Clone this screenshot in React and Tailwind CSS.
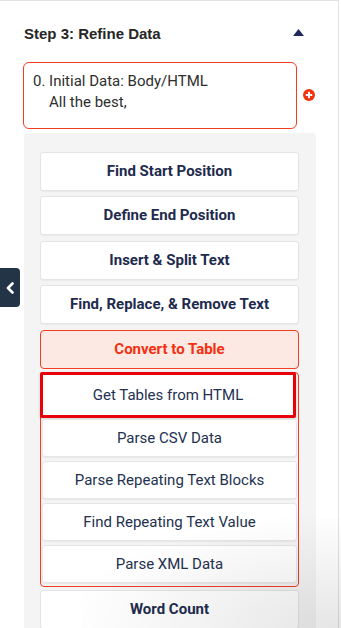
import React from "react";

const outerBtn =
  "h-[39px] w-full flex items-center justify-center bg-white border border-[#e4e4e4] rounded-[3px] text-[15px] font-bold text-[#1e2b4d] shadow-[0_1px_1px_rgba(0,0,0,0.04)]";
const innerBtn =
  "h-[38.5px] mt-[3.5px] mx-px flex items-center justify-center bg-white border border-[#e6e6e6] rounded-[3px] text-[15px] text-[#23314f] shadow-[0_1px_1px_rgba(0,0,0,0.05)]";

export default function App() {
  return (
    <div
      className="relative w-[341px] h-[628px] overflow-hidden bg-white"
      style={{ fontFamily: "Roboto, 'Liberation Sans', sans-serif" }}
    >
      <div className="w-[339px] h-full border-t border-r border-[#e2e2e2]">
        {/* header */}
        <div className="flex items-center justify-between pl-6 pr-[34px] pt-[23px]">
          <div className="text-[15px] leading-5 font-bold text-[#262626] font-['Liberation_Sans',Arial,sans-serif]">
            Step 3: Refine Data
          </div>
          <svg width="11" height="7" viewBox="0 0 11 7" className="mt-[-3px]">
            <polygon points="5.5,0 11,7 0,7" fill="#1f2a5c" />
          </svg>
        </div>

        {/* data box */}
        <div className="flex items-center mt-[18px] ml-[23px]">
          <div className="w-[274px] h-[67px] border border-[#f23d1f] rounded-[6px] pl-[9px] pt-[7.5px] text-[15px] leading-[21px] text-[#2e2e2e]">
            <div>0. Initial Data: Body/HTML</div>
            <div className="pl-[16px]">All the best,</div>
          </div>
          <svg width="12" height="12" viewBox="0 0 12 12" className="ml-[6px] mt-[-2px]">
            <circle cx="6" cy="6" r="6" fill="#f2340e" />
            <rect x="2.8" y="5" width="6.4" height="2" fill="#fff" />
            <rect x="5" y="2.8" width="2" height="6.4" fill="#fff" />
          </svg>
        </div>

        {/* panel */}
        <div className="mt-[4px] ml-6 w-[292px] h-[500px] bg-[#f4f4f4] rounded-t-[4px] pt-[18.5px] pl-4 pr-[17px]">
          <div className="flex flex-col gap-[5.5px]">
            <div className={outerBtn}>Find Start Position</div>
            <div className={outerBtn}>Define End Position</div>
            <div className={outerBtn}>Insert &amp; Split Text</div>
            <div className={outerBtn}>Find, Replace, &amp; Remove Text</div>
            <div className="h-[39px] w-full flex items-center justify-center bg-[#fde9e3] border border-[#f43d1e] rounded-[4px] text-[15px] font-bold text-[#f3300f]">
              Convert to Table
            </div>
          </div>

          <div className="mt-[3px] border border-[#f23d1f] rounded-[4px] pb-[3px]">
            <div className="-ml-px -mt-px w-[256px] h-[46.5px] flex items-center justify-center bg-white border-[3.5px] border-[#e8000a] rounded-[2px] text-[15px] text-[#23314f] shadow-[0_1px_3px_rgba(0,0,0,0.15)]">
              Get Tables from HTML
            </div>
            <div className="h-[38.5px] mt-[0.5px] mx-px flex items-center justify-center bg-white border border-[#e6e6e6] rounded-[3px] text-[15px] text-[#23314f] shadow-[0_1px_1px_rgba(0,0,0,0.05)]">
              Parse CSV Data
            </div>
            <div className={innerBtn}>Parse Repeating Text Blocks</div>
            <div className={innerBtn}>Find Repeating Text Value</div>
            <div className={innerBtn}>Parse XML Data</div>
          </div>

          <div className={"mt-[3px] " + outerBtn}>Word Count</div>
        </div>
      </div>

      {/* left collapse tab */}
      <div className="absolute left-0 top-[268px] w-[20px] h-[39px] bg-[#243447] rounded-r-[4px] flex items-center justify-center">
        <svg width="8" height="12" viewBox="0 0 8 12">
          <polyline
            points="6.5,1.5 2,6 6.5,10.5"
            fill="none"
            stroke="#fff"
            strokeWidth="2.6"
            strokeLinecap="round"
            strokeLinejoin="round"
          />
        </svg>
      </div>

      {/* bottom-right shadow */}
      <div className="pointer-events-none absolute right-0 bottom-0 w-[260px] h-[110px] bg-[radial-gradient(ellipse_at_100%_100%,rgba(0,0,0,0.10),rgba(0,0,0,0.04)_45%,transparent_75%)]" />
    </div>
  );
}
